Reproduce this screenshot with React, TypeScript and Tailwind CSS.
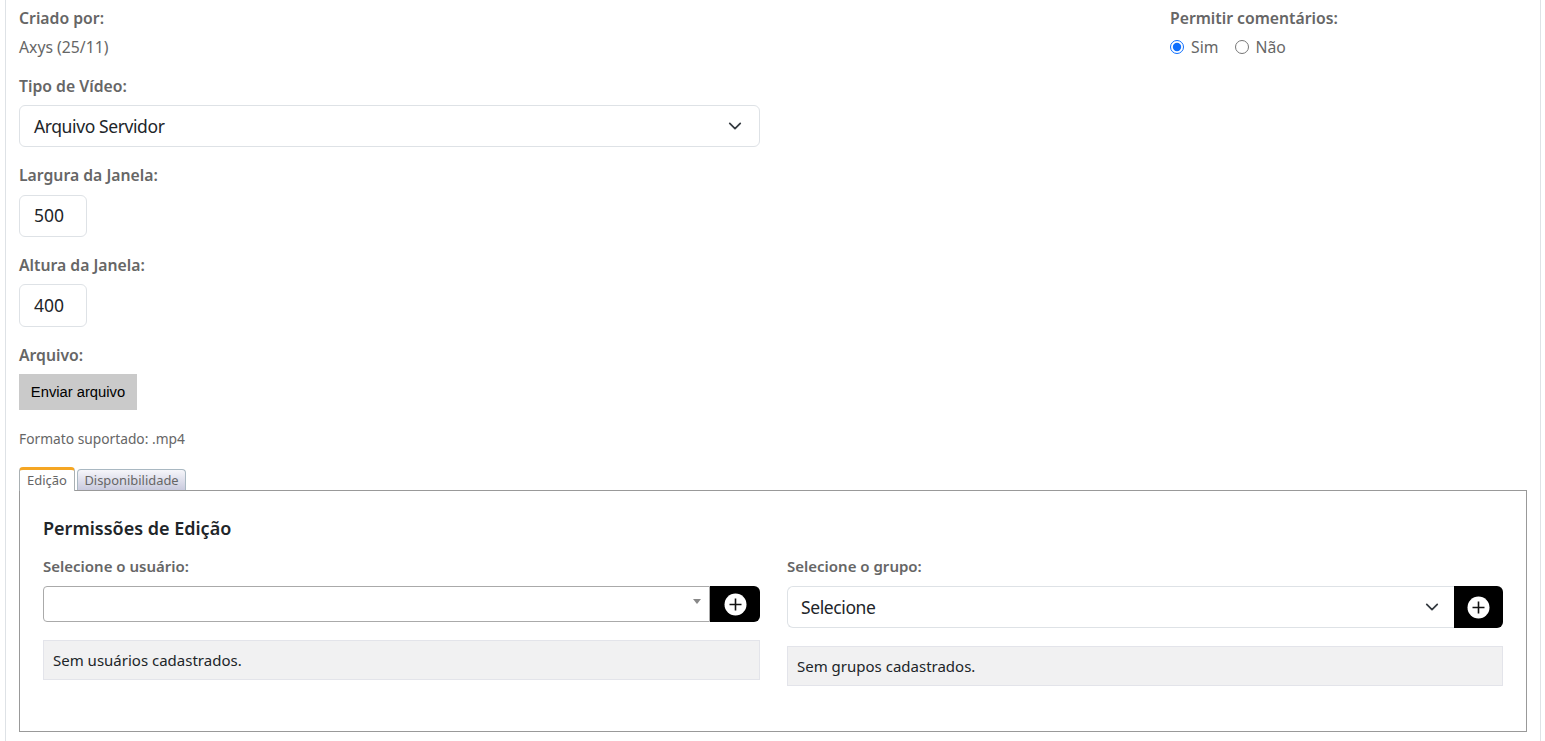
import React from "react";

const Label = ({ children, className = "" }: { children: React.ReactNode; className?: string }) => (
  <div className={`text-[15.75px] leading-[21px] font-semibold text-[#666] ${className}`}>{children}</div>
);

const SmallLabel = ({ children }: { children: React.ReactNode }) => (
  <div className="text-[15px] leading-[21px] font-semibold text-[#666]">{children}</div>
);

const Chevron = () => (
  <svg width="14" height="14" viewBox="0 0 16 16" fill="none" className="shrink-0">
    <path d="M2 5l6 6 6-6" stroke="#343a40" strokeWidth="2" strokeLinecap="round" strokeLinejoin="round" />
  </svg>
);

const PlusButton = ({ cls }: { cls: string }) => (
  <div className={`${cls} bg-black rounded-r-[6px] flex items-center justify-center shrink-0`}>
    <svg width="23" height="23" viewBox="0 0 23 23">
      <circle cx="11.5" cy="11.5" r="11" fill="#fff" />
      <path d="M11.5 5.5v12M5.5 11.5h12" stroke="#111" strokeWidth="1.6" />
    </svg>
  </div>
);

export default function App() {
  return (
    <div className="w-[1545px] h-[741px] overflow-hidden bg-white font-['Noto_Sans',sans-serif]">
      <div className="ml-[5px] w-[1536px] h-[741px] border-x border-[#dee2e6] pl-[13px] pr-[12px]">
        <div className="flex justify-between h-[64px] pt-[8px]">
          <div>
            <Label>Criado por:</Label>
            <div className="mt-[8px] text-[15.75px] leading-[21px] text-[#666]">Axys (25/11)</div>
          </div>
          <div className="w-[358px]">
            <Label>Permitir comentários:</Label>
            <div className="mt-[8px] flex items-center text-[15.75px] leading-[21px] text-[#666]">
              <input type="radio" name="c" defaultChecked className="w-[14px] h-[14px] m-0 -translate-y-[1px] accent-[#0d6efd]" />
              <span className="ml-[7px]">Sim</span>
              <input type="radio" name="c" className="w-[14px] h-[14px] m-0 ml-[17px] -translate-y-[1px]" />
              <span className="ml-[6px]">Não</span>
            </div>
          </div>
        </div>

        <Label className="mt-[12px]">Tipo de Vídeo:</Label>
        <div className="mt-[8px] w-[741px] h-[42px] border border-[#dee2e6] rounded-[6px] pl-[14px] pr-[17px] flex items-center justify-between text-[17.5px] tracking-[-0.4px] text-[#212529]">
          <span>Arquivo Servidor</span>
          <Chevron />
        </div>

        <Label className="mt-[18px]">Largura da Janela:</Label>
        <div className="mt-[9px] w-[68px] h-[42px] border border-[#dee2e6] rounded-[6px] pl-[14px] pb-[2px] flex items-center text-[17.5px] text-[#212529]">500</div>

        <Label className="mt-[18px]">Altura da Janela:</Label>
        <div className="mt-[8px] w-[68px] h-[43px] border border-[#dee2e6] rounded-[6px] pl-[14px] flex items-center text-[17.5px] text-[#212529]">400</div>

        <Label className="mt-[18px]">Arquivo:</Label>
        <div className="mt-[8px] w-[118px] h-[36px] bg-[#cacaca] flex items-center justify-center text-[14.75px] text-black font-['Liberation_Sans',sans-serif]">
          Enviar arquivo
        </div>
        <div className="mt-[19px] text-[13.78px] leading-[20px] text-[#666]">Formato suportado: .mp4</div>

        <div className="mt-[17px] flex items-end h-[24px] relative z-10">
          <div className="w-[56px] h-[24px] bg-white rounded-t-[4px] border-x border-[#a9b0b3] border-t-[3px] border-t-[#f5a623] pt-[1px] flex items-center justify-center text-[13px] text-[#666] -mb-px">
            Edição
          </div>
          <div className="ml-[2px] w-[109px] h-[21px] rounded-t-[4px] border border-b-0 border-[#a9b8c2] bg-gradient-to-b from-[#f6f6fa] to-[#c9cade] pt-[2px] flex items-center justify-center text-[12.9px] text-[#666]">
            Disponibilidade
          </div>
        </div>

        <div className="w-[1508px] h-[242px] border border-[#999] px-[23px] pt-[22px]">
          <div className="text-[18px] leading-[30px] font-semibold text-[#212529]">Permissões de Edição</div>
          <div className="mt-[13px] flex gap-[27px] items-start">
            <div className="w-[717px]">
              <SmallLabel>Selecione o usuário:</SmallLabel>
              <div className="mt-[9px] flex h-[36px]">
                <div className="flex-1 border border-[#aaa] rounded-l-[4px] relative">
                  <span className="absolute right-[8px] top-[12px] w-0 h-0 border-x-[4px] border-x-transparent border-t-[5px] border-t-[#888]" />
                </div>
                <PlusButton cls="w-[50px] h-[36px]" />
              </div>
              <div className="mt-[18px] h-[40px] bg-[#f1f1f2] border border-[#e3e4ea] pl-[9px] flex items-center text-[15px] text-[#212529]">
                Sem usuários cadastrados.
              </div>
            </div>
            <div className="w-[716px]">
              <SmallLabel>Selecione o grupo:</SmallLabel>
              <div className="mt-[9px] flex h-[42px]">
                <div className="flex-1 border border-[#dee2e6] border-r-0 rounded-l-[6px] pl-[13px] pr-[15px] flex items-center justify-between text-[17.5px] tracking-[-0.4px] text-[#212529]">
                  <span>Selecione</span>
                  <Chevron />
                </div>
                <PlusButton cls="w-[49px] h-[42px]" />
              </div>
              <div className="mt-[18px] h-[40px] bg-[#f1f1f2] border border-[#e3e4ea] pl-[9px] flex items-center text-[15px] text-[#212529]">
                Sem grupos cadastrados.
              </div>
            </div>
          </div>
        </div>
      </div>
    </div>
  );
}
